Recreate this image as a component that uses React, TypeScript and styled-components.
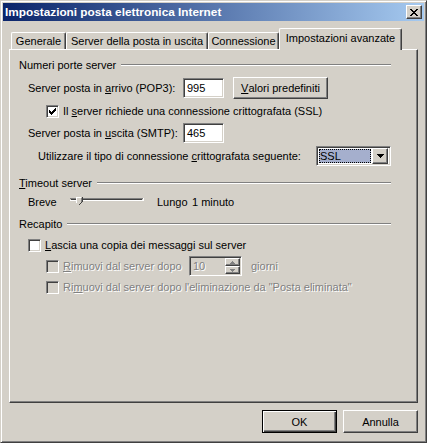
import React from 'react';
import styled, { createGlobalStyle, css } from 'styled-components';

const GlobalStyle = createGlobalStyle`
  *, *::before, *::after { box-sizing: border-box; }
  body {
    margin: 0;
    background: #d4d0c8;
    font-family: "Liberation Sans", Arial, sans-serif;
    font-size: 11px;
    color: #000;
  }
`;

const raised = css`
  border: 1px solid;
  border-color: #fff #404040 #404040 #fff;
  box-shadow: inset -1px -1px #808080, inset 1px 1px #d4d0c8;
  background: #d4d0c8;
`;

const sunken = css`
  border: 1px solid;
  border-color: #808080 #fff #fff #808080;
  box-shadow: inset 1px 1px #404040, inset -1px -1px #d4d0c8;
`;

const Window = styled.div`
  width: 427px;
  height: 443px;
  display: flex;
  flex-direction: column;
  padding: 2px;
  background: #d4d0c8;
  border: 1px solid;
  border-color: #d4d0c8 #404040 #404040 #d4d0c8;
  box-shadow: inset 1px 1px #fff, inset -1px -1px #808080;
`;

const TitleBar = styled.div`
  height: 18px;
  display: flex;
  align-items: center;
  padding: 0 2px;
  background: linear-gradient(to right, #0a246a, #a6caf0);
  color: #fff;
  font-weight: bold;
  font-size: 11.8px;
`;

const CloseButton = styled.div`
  ${raised};
  width: 16px;
  height: 14px;
  margin-left: auto;
  display: flex;
  align-items: center;
  justify-content: center;
`;

const Body = styled.div`
  flex: 1;
  display: flex;
  flex-direction: column;
  padding: 7px 6px 0;
`;

const TabStrip = styled.div`
  height: 21px;
  display: flex;
  align-items: flex-end;
  padding-left: 2px;
`;

const Tab = styled.div<{ $width: number; $active?: boolean }>`
  width: ${(p) => p.$width}px;
  height: ${(p) => (p.$active ? 22 : 17)}px;
  margin-bottom: ${(p) => (p.$active ? -1 : 0)}px;
  padding-bottom: ${(p) => (p.$active ? 3 : 0)}px;
  position: relative;
  z-index: ${(p) => (p.$active ? 1 : 0)};
  display: flex;
  align-items: center;
  justify-content: center;
  white-space: nowrap;
  background: #d4d0c8;
  border-left: 1px solid #fff;
  border-top: 1px solid #fff;
  border-right: 1px solid #404040;
  border-radius: 2px 2px 0 0;
  box-shadow: inset -1px 0 #808080;
`;

const Panel = styled.div`
  height: 354px;
  display: flex;
  flex-direction: column;
  padding: 0 26px 0 9px;
  border: 1px solid;
  border-color: #fff #404040 #404040 #fff;
  box-shadow: inset -1px -1px #808080;
`;

const GroupHeader = styled.div<{ $top: number }>`
  height: 13px;
  margin-top: ${(p) => p.$top}px;
  display: flex;
  align-items: center;
  white-space: nowrap;

  &::after {
    content: '';
    flex: 1;
    height: 2px;
    margin-left: 5px;
    border-top: 1px solid #808080;
    border-bottom: 1px solid #fff;
  }
`;

const Row = styled.div<{ $top: number; $height: number; $indent: number }>`
  height: ${(p) => p.$height}px;
  margin-top: ${(p) => p.$top}px;
  padding-left: ${(p) => p.$indent}px;
  display: flex;
  align-items: center;
  white-space: nowrap;
`;

const Label = styled.span<{ $width?: number; $gap?: number; $disabled?: boolean }>`
  width: ${(p) => (p.$width ? `${p.$width}px` : 'auto')};
  flex-shrink: 0;
  margin-left: ${(p) => p.$gap ?? 0}px;
  ${(p) =>
    p.$disabled &&
    css`
      color: #808080;
      text-shadow: 1px 1px 0 #fff;
    `}
`;

const Key = styled.span`
  text-decoration: underline;
  text-underline-offset: 1px;
`;

const TextBox = styled.div<{ $width: number; $disabled?: boolean }>`
  ${sunken};
  width: ${(p) => p.$width}px;
  height: 20px;
  display: flex;
  align-items: center;
  padding-left: 3px;
  background: ${(p) => (p.$disabled ? '#d4d0c8' : '#fff')};
  color: ${(p) => (p.$disabled ? '#808080' : '#000')};
`;

const Button = styled.div<{ $width: number; $height?: number; $default?: boolean; $gap?: number }>`
  ${raised};
  width: ${(p) => p.$width}px;
  height: ${(p) => p.$height ?? 23}px;
  margin-left: ${(p) => p.$gap ?? 0}px;
  display: flex;
  align-items: center;
  justify-content: center;
  ${(p) =>
    p.$default &&
    css`
      border: 1px solid #000;
      box-shadow: inset 1px 1px #fff, inset -1px -1px #404040, inset -2px -2px #808080;
    `}
`;

const CheckBox = styled.div<{ $disabled?: boolean }>`
  ${sunken};
  width: 13px;
  height: 13px;
  flex-shrink: 0;
  display: flex;
  align-items: center;
  justify-content: center;
  background: ${(p) => (p.$disabled ? '#d4d0c8' : '#fff')};
`;

const Combo = styled.div`
  ${sunken};
  width: 75px;
  height: 20px;
  margin-left: auto;
  display: flex;
  align-items: center;
  padding: 2px;
  background: #fff;
`;

const ComboValue = styled.div`
  flex: 1;
  height: 100%;
  margin-right: 1px;
  display: flex;
  align-items: center;
  padding-left: 1px;
  background: #a5afcd;
  outline: 1px dotted #000;
  outline-offset: -1px;
`;

const DropButton = styled.div`
  ${raised};
  width: 16px;
  height: 16px;
  display: flex;
  align-items: center;
  justify-content: center;
`;

const SpinButtons = styled.div`
  width: 15px;
  height: 16px;
  margin-left: auto;
  margin-right: 1px;
  display: flex;
  flex-direction: column;
`;

const SpinPart = styled.div`
  ${raised};
  flex: 1;
  display: flex;
  align-items: center;
  justify-content: center;
`;

const Footer = styled.div`
  margin-top: 7px;
  display: flex;
  justify-content: flex-end;
  gap: 6px;
`;

const CloseGlyph = () => (
  <svg width="8" height="7" viewBox="0 0 8 7" shapeRendering="crispEdges">
    <path d="M0 0h2v1h1v1h2V1h1V0h2v1H7v1H6v1H5v1h1v1h1v1h1v1H6V6H5V5H3v1H2v1H0V6h1V5h1V4h1V3H2V2H1V1H0z" fill="#000" />
  </svg>
);

const CheckMark = () => (
  <svg width="7" height="7" viewBox="0 0 7 7" shapeRendering="crispEdges">
    {[2, 3, 4, 3, 2, 1, 0].map((y, x) => (
      <rect key={x} x={x} y={y} width="1" height="3" fill="#000" />
    ))}
  </svg>
);

const Arrow = ({ up, color = '#000', size = 7 }: { up?: boolean; color?: string; size?: number }) => {
  const h = Math.ceil(size / 2);
  return (
    <svg width={size} height={h} viewBox={`0 0 ${size} ${h}`} shapeRendering="crispEdges">
      <polygon
        points={up ? `${size / 2},0 ${size},${h} 0,${h}` : `0,0 ${size},0 ${size / 2},${h}`}
        fill={color}
      />
    </svg>
  );
};

const Slider = () => (
  <svg width="74" height="16" viewBox="0 0 74 16" shapeRendering="crispEdges">
    <rect x="0" y="4" width="73" height="1" fill="#808080" />
    <rect x="1" y="5" width="71" height="1" fill="#404040" />
    <rect x="0" y="6" width="74" height="1" fill="#fff" />
    <rect x="73" y="4" width="1" height="3" fill="#fff" />
    <polygon points="6,3 12,3 12,8 9,11 6,8" fill="#d4d0c8" />
    <polyline points="6,9 6,3 11,3" fill="none" stroke="#fff" strokeWidth="1" />
    <polyline points="12,3 12,8 9,11" fill="none" stroke="#404040" strokeWidth="1" />
    <polyline points="11,4 11,8" fill="none" stroke="#808080" strokeWidth="1" />
  </svg>
);

const tabs = [
  { label: 'Generale', width: 55 },
  { label: 'Server della posta in uscita', width: 142 },
  { label: 'Connessione', width: 71 },
  { label: 'Impostazioni avanzate', width: 123, active: true },
];

const App: React.FC = () => {
  return (
    <>
      <GlobalStyle />
      <Window>
        <TitleBar>
          Impostazioni posta elettronica Internet
          <CloseButton>
            <CloseGlyph />
          </CloseButton>
        </TitleBar>
        <Body>
          <TabStrip>
            {tabs.map((tab) => (
              <Tab key={tab.label} $width={tab.width} $active={tab.active}>
                {tab.label}
              </Tab>
            ))}
          </TabStrip>
          <Panel>
            <GroupHeader $top={8}>Numeri porte server</GroupHeader>
            <Row $top={6} $height={22} $indent={9}>
              <Label $width={155}>
                Server posta in <Key>a</Key>rrivo (POP3):
              </Label>
              <TextBox $width={41}>995</TextBox>
              <Button $width={95} $height={22} $gap={9}>
                <Key>V</Key>alori predefiniti
              </Button>
            </Row>
            <Row $top={5} $height={14} $indent={27}>
              <CheckBox>
                <CheckMark />
              </CheckBox>
              <Label $gap={4}>
                Il <Key>s</Key>erver richiede una connessione crittografata (SSL)
              </Label>
            </Row>
            <Row $top={5} $height={20} $indent={9}>
              <Label $width={155}>
                Server posta in <Key>u</Key>scita (SMTP):
              </Label>
              <TextBox $width={41}>465</TextBox>
            </Row>
            <Row $top={3} $height={20} $indent={19}>
              <Label>
                Utilizzare il tipo di connessione <Key>c</Key>rittografata seguente:
              </Label>
              <Combo>
                <ComboValue>SSL</ComboValue>
                <DropButton>
                  <Arrow />
                </DropButton>
              </Combo>
            </Row>

            <GroupHeader $top={10}>
              <span>
                <Key>T</Key>imeout server
              </span>
            </GroupHeader>
            <Row $top={5} $height={16} $indent={9}>
              <Label $width={42}>Breve</Label>
              <Slider />
              <Label $width={35} $gap={13}>
                Lungo
              </Label>
              <Label>1 minuto</Label>
            </Row>

            <GroupHeader $top={7}>Recapito</GroupHeader>
            <Row $top={8} $height={14} $indent={9}>
              <CheckBox />
              <Label $gap={4}>
                <Key>L</Key>ascia una copia dei messaggi sul server
              </Label>
            </Row>
            <Row $top={4} $height={20} $indent={27}>
              <CheckBox $disabled />
              <Label $gap={4} $width={126} $disabled>
                <Key>R</Key>imuovi dal server dopo
              </Label>
              <TextBox $width={53} $disabled>
                <Label $disabled>10</Label>
                <SpinButtons>
                  <SpinPart>
                    <Arrow up size={5} color="#808080" />
                  </SpinPart>
                  <SpinPart>
                    <Arrow size={5} color="#808080" />
                  </SpinPart>
                </SpinButtons>
              </TextBox>
              <Label $gap={9} $disabled>
                giorni
              </Label>
            </Row>
            <Row $top={4} $height={14} $indent={27}>
              <CheckBox $disabled />
              <Label $gap={4} $disabled>
                Ri<Key>m</Key>uovi dal server dopo l'eliminazione da "Posta eliminata"
              </Label>
            </Row>
          </Panel>
          <Footer>
            <Button $width={75} $default>
              OK
            </Button>
            <Button $width={75}>Annulla</Button>
          </Footer>
        </Body>
      </Window>
    </>
  );
};

export default App;
